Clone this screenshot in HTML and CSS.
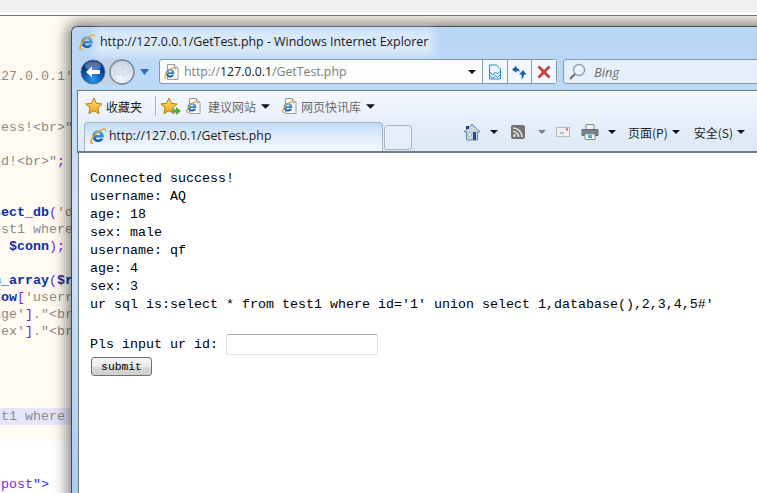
FILE: index.html
```html
<!DOCTYPE html>
<html lang="en">
<head>
<meta charset="utf-8">
<title>GetTest.php</title>
<link rel="stylesheet" href="styles.css">
</head>
<body>
<svg class="defs" width="0" height="0" aria-hidden="true">
  <defs>
    <linearGradient id="gBlue" x1="0" y1="0" x2="0" y2="1"><stop offset="0" stop-color="#5ab4f0"/><stop offset="1" stop-color="#0c52ac"/></linearGradient>
    <linearGradient id="gStar" x1="0" y1="0" x2="0" y2="1"><stop offset="0" stop-color="#ffe680"/><stop offset="1" stop-color="#f0a010"/></linearGradient>
    <radialGradient id="gBack" cx=".5" cy=".8" r=".75"><stop offset="0" stop-color="#2ea0ee"/><stop offset=".55" stop-color="#0a4fa8"/><stop offset="1" stop-color="#032a70"/></radialGradient>
    <radialGradient id="gFwd" cx=".5" cy=".7" r=".7"><stop offset="0" stop-color="#f4f8fc"/><stop offset="1" stop-color="#c2d0de"/></radialGradient>
    <symbol id="ie" viewBox="0.5 0.5 15 15">
      <path d="M8.200 2.600a5.500 5.500 0 0 0-5.600 5.600c0 3.200 2.400 5.400 5.500 5.400 2.400 0 4.300-1.200 5-3.300h-3.200c-.4.700-1 1-1.800 1-1.100 0-2-.8-2.100-2h7.400c.3-3.800-2.200-6.700-5.200-6.700zM6 7c.2-1 1-1.700 2.100-1.700S10 6 10.100 7z" fill="url(#gBlue)" fill-rule="evenodd"/>
      <path d="M1 15c-1.300-1.500.8-6 4.500-9.500C9.400 1.800 13.800-.2 15.200 1c.9.800.4 2.400-.4 3.700.2-1.100.2-2-.4-2.400-1.200-.9-4.700 1-7.800 4S1.600 12.500 2.300 13.900c.4.700 1.500.7 2.700.2-1.500 1.100-3.200 1.700-4 .9z" fill="#e8a020"/>
    </symbol>
    <symbol id="page" viewBox="0 0 16 16">
      <path d="M3.500.5h7l3.500 3.500v11.500H3.500z" fill="#fbfcfe" stroke="#9a9a9a"/>
      <path d="M10.500.5V4H14" fill="#e4e8ee" stroke="#9a9a9a"/>
      <use href="#ie" x="0" y="3" width="12" height="12"/>
    </symbol>
    <symbol id="star" viewBox="0 0 18 18">
      <path d="M9 1l2.400 5.300 5.700.7-4.200 3.900 1.200 5.700L9 13.800l-5.100 2.800 1.200-5.700L.9 7l5.700-.7z" fill="url(#gStar)" stroke="#b87a10" stroke-linejoin="round"/>
    </symbol>
  </defs>
</svg>
<div class="desktop">
  <div class="strip"></div>
  <pre class="code"><span class="gy">127.0.0.1'</span>


<span class="gy">cess!&lt;br&gt;"</span>

<span class="gy">ed!&lt;br&gt;"</span><span class="pu">;</span>


<span class="bl">sect_db</span><span class="pu">(</span><span class="gy">'d</span>
<span class="gy">est1 where</span>
  <span class="bl">$conn</span><span class="pu">);</span>

<span class="bl">n_array</span><span class="pu">(</span><span class="bl">$r</span>
<span class="bl">row</span><span class="pu">[</span><span class="gy">'userr</span>
<span class="gy">age'</span><span class="pu">]</span><span class="gy">."&lt;br</span>
<span class="gy">sex'</span><span class="pu">]</span><span class="gy">."&lt;br</span>




<span class="hl"><span class="gy">st1 where i</span></span>



<span class="pu">"post</span><span class="qt">"&gt;</span></pre>

  <div class="window">
    <div class="titlebar">
      <svg class="ic16"><use href="#ie"/></svg>
      <span class="titletext">http://127.0.0.1/GetTest.php - Windows Internet Explorer</span>
    </div>
    <div class="navrow">
      <div class="navbtns">
        <div class="navpair">
          <svg class="navsvg" viewBox="0 0 26 26"><circle cx="13" cy="13" r="12" fill="url(#gBack)" stroke="#5d7f9e"/><ellipse cx="13" cy="7" rx="8" ry="4.500" fill="#fff" opacity=".3"/><path d="M6 13l6-5.500V11h8v4h-8v3.500z" fill="#fff"/></svg>
          <svg class="navsvg" viewBox="0 0 26 26"><circle cx="13" cy="13" r="12" fill="url(#gFwd)" stroke="#75838f" stroke-width="1.300"/><path d="M20 13l-6-5.500V11H6v4h8v3.500z" fill="#dfe7ef" stroke="#bcc8d4" stroke-width=".6"/></svg>
        </div>
        <svg class="navdrop" viewBox="0 0 9 6"><path d="M0 0h9L4.500 6z" fill="#2c6fb4"/></svg>
      </div>
      <div class="addr">
        <svg class="ic16 addricon"><use href="#page"/></svg>
        <span class="url">http://<b>127.0.0.1</b>/GetTest.php</span>
        <svg class="tri tri-addr" viewBox="0 0 8 4"><path d="M0 0h8L4 4z"/></svg>
        <span class="addrbtn">
          <svg class="ic16" viewBox="0 0 16 16"><path d="M2.500 1h7l4 4v10h-11z" fill="#eaf5fd" stroke="#2a8ac8"/><path d="M3 8l3 3 2.500-3 2 2 3-3M3 11.500l3 3 2.500-3 2 2 3-3" fill="none" stroke="#2a8ac8"/></svg>
        </span>
        <span class="addrbtn">
          <svg class="ic16" viewBox="0 0 16 16"><path d="M5.500 1.500L1 5.500 5.500 9V7c1.500-.2 2.500.2 3 1.500.3-3-1-4.500-3-4.500z" fill="#1d5ea8"/><path d="M12 6l3.500 4.500H13c0 2-.8 3.700-2.500 4.500.5-1.500.3-3.300-.3-4.500H8z" fill="#1d5ea8"/></svg>
        </span>
        <span class="addrbtn">
          <svg class="ic16" viewBox="0 0 16 16"><path d="M2.500 2.500l11 11M13.500 2.500l-11 11" stroke="#c43b3b" stroke-width="2.600" fill="none"/></svg>
        </span>
      </div>
      <div class="search">
        <svg class="searchicon" viewBox="0 0 18 18"><circle cx="11" cy="7" r="5.500" fill="#e8f3fc" stroke="#8aa0b0" stroke-width="1.400"/><path d="M7 11l-5 5" stroke="#777" stroke-width="2.400"/></svg>
        <i>Bing</i>
      </div>
    </div>
    <div class="panel">
      <div class="favbar">
        <svg class="ic18"><use href="#star"/></svg>
        <span class="cjk dark favlabel">收藏夹</span>
        <span class="vsep"></span>
        <span class="addstar">
          <svg class="ic18"><use href="#star"/></svg>
          <svg class="plus" viewBox="0 0 9 8"><path d="M0 2.500h4V0l5 4-5 4V5.500H0z" fill="#4cb040"/></svg>
        </span>
        <svg class="ic16 pageicon"><use href="#page"/></svg>
        <span class="cjk soft">建议网站</span>
        <svg class="tri tri-fav" viewBox="0 0 8 4"><path d="M0 0h8L4 4z"/></svg>
        <svg class="ic16 pageicon2"><use href="#page"/></svg>
        <span class="cjk soft">网页快讯库</span>
        <svg class="tri tri-fav" viewBox="0 0 8 4"><path d="M0 0h8L4 4z"/></svg>
      </div>
      <div class="tabbar">
        <div class="tab">
          <svg class="ic16"><use href="#ie"/></svg>
          <span class="tabtext">http://127.0.0.1/GetTest.php</span>
        </div>
        <div class="newtab"></div>
        <div class="tools">
          <svg class="ic18 t-home" viewBox="0 0 18 18"><path d="M9 1L1 9h2.500v8h11V9H17z" fill="#c8d4e0" stroke="#5a6e90" stroke-width=".8"/><path d="M3 3h3v3H3z" fill="#2438a8"/><path d="M10 9h3v8h-3z" fill="#1c4ea0"/><path d="M5 10h3v3H5z" fill="#fff" stroke="#7a8aa0" stroke-width=".5"/></svg>
          <svg class="tri tri-tool" viewBox="0 0 8 4"><path d="M0 0h8L4 4z"/></svg>
          <svg class="ic16 t-rss" viewBox="0 0 14 14"><rect width="14" height="14" rx="2" fill="#737373"/><circle cx="3.500" cy="10.500" r="1.500" fill="#ddd"/><path d="M2 6.500a5.500 5.500 0 0 1 5.500 5.500M2 3a9 9 0 0 1 9 9" fill="none" stroke="#ddd" stroke-width="1.700"/></svg>
          <svg class="tri tri-tool off t-rssarrow" viewBox="0 0 8 4"><path d="M0 0h8L4 4z"/></svg>
          <svg class="ic14 t-mail" viewBox="0 0 14 10"><rect x=".5" y=".5" width="13" height="9" fill="#f2f0ee" stroke="#b8b8b8"/><path d="M4 6h4" stroke="#8a8a8a"/><rect x="10" y="1.500" width="2" height="2" fill="#e05050"/></svg>
          <svg class="ic18 t-print" viewBox="0 0 18 16"><path d="M5 .5h8v5H5z" fill="#f4f4f4" stroke="#8c8c8c"/><path d="M1 5.500h16v6H1z" fill="#77838c" stroke="#5f6a72"/><path d="M4 10h10v5.500H4z" fill="#fff" stroke="#8c8c8c"/><path d="M7 11h4v3H7z" fill="#4ab0d0"/></svg>
          <svg class="tri tri-tool" viewBox="0 0 8 4"><path d="M0 0h8L4 4z"/></svg>
          <span class="cjk dark toollabel">页面(P)</span>
          <svg class="tri tri-small" viewBox="0 0 8 4"><path d="M0 0h8L4 4z"/></svg>
          <span class="cjk dark toollabel2">安全(S)</span>
          <svg class="tri tri-small" viewBox="0 0 8 4"><path d="M0 0h8L4 4z"/></svg>
        </div>
      </div>
    </div>
    <div class="page">
      <div>Connected success!</div>
      <div>username: AQ</div>
      <div>age: 18</div>
      <div>sex: male</div>
      <div>username: qf</div>
      <div>age: 4</div>
      <div>sex: 3</div>
      <div>ur sql is:select * from test1 where id='1' union select 1,database(),2,3,4,5#'</div>
      <div class="spacer"></div>
      <form class="form">
        <label class="inputline">Pls input ur id: <input class="field" type="text"></label>
        <button class="submit" type="button">submit</button>
      </form>
    </div>
  </div>
</div>
</body>
</html>
```
FILE: styles.css
```css
* { box-sizing: border-box; }
html, body { margin: 0; padding: 0; }
body { width: 757px; height: 493px; overflow: hidden; background: #fff; }
.defs { position: absolute; }
svg { display: block; flex: none; }

.desktop { position: relative; width: 757px; height: 493px; overflow: hidden; background: #fff; }
.strip {
  position: relative; z-index: 2; height: 16px; background: #f0f0f0;
  border-bottom: 1px solid #707070;
  box-shadow: inset 0 -3px 0 #fff;
}

.code {
  margin: 0 0 0 -7px; padding-top: 52px; height: 477px;
  font: 13.33px/17px "Liberation Mono", monospace;
  color: #808080;
  background: linear-gradient(#fffbf2 425px, #fff 425px);
}
.gy { color: #8a8a8a; }
.bl { color: #0b2fa8; font-weight: bold; }
.pu { color: #7a1fd0; }
.qt { color: #1f2fff; }
.hl { display: inline-block; width: 90px; background: #e6e6fa; }

.window {
  position: absolute; left: 71px; top: 26px; width: 720px; height: 490px;
  border-radius: 6px 6px 0 0;
  border-top: 1px solid #3d4a58;
  border-left: 1px solid #3d4a58;
  background: linear-gradient(#b8d6f5, #bcd9f7 60px, #cfe3f8 200px, #a9cbee 480px);
  box-shadow: 0 0 15px 3px rgba(0, 0, 0, .55);
  font-family: "Open Sans", "Noto Sans", sans-serif;
  display: flex; flex-direction: column;
}

.titlebar { display: flex; align-items: center; gap: 5px; height: 29px; padding: 0 0 0 7px; flex: none; }
.titletext {
  font-size: 12.4px; color: #1a1a1a; white-space: nowrap; line-height: 16px;
  background: rgba(255, 255, 255, .45);
  box-shadow: 0 0 9px 6px rgba(255, 255, 255, .45);
}
.ic16 { width: 16px; height: 16px; }
.ic18 { width: 18px; height: 18px; }
.ic14 { width: 14px; height: 10px; }

.navrow { display: flex; align-items: center; height: 34px; flex: none; padding: 0 0 3px 8px; }
.navbtns { display: flex; align-items: center; gap: 3px; width: 79px; flex: none; }
.navpair { display: flex; gap: 3px; background: #c3d3e6; border-radius: 13px; }
.navsvg { width: 26px; height: 26px; }
.navdrop { width: 9px; height: 6px; margin-left: 2px; }

.addr {
  display: flex; align-items: center; width: 398px; height: 25px; flex: none;
  background: #fbfdff; border: 1px solid #8c97a3; border-radius: 3px;
}
.addricon { margin-left: 4px; }
.url { font-size: 12.3px; color: #7d7d7d; margin-left: 4px; width: 287px; white-space: nowrap; }
.url b { color: #222; font-weight: 400; }
.tri { width: 8px; height: 4px; fill: #111; }
.tri-addr { margin-right: 6px; }
.addrbtn {
  display: flex; align-items: center; justify-content: center;
  width: 25px; height: 100%; border-left: 1px solid #8c97a3;
  background: #f3f8fe;
}
.search {
  display: flex; align-items: center; gap: 8px; width: 200px; height: 25px; margin-left: 6px; flex: none;
  background: #e6f0fb; border: 1px solid #8c97a3; border-radius: 3px;
  padding-left: 4px; font-size: 13px; color: #6d6d6d;
}
.searchicon { width: 18px; height: 18px; }

.panel {
  flex: none; margin-left: 5px; height: 63px;
  border: 1px solid #6d7a88; border-right: 0; border-bottom: 2px solid #6d7a88;
  background: linear-gradient(#f5f9ff, #e9f1fb 40%, #dbe8f6);
  display: flex; flex-direction: column;
}
.favbar { display: flex; align-items: center; height: 30px; padding-left: 7px; flex: none; font-size: 12px; }
.cjk { font-family: "Noto Sans CJK SC", "Open Sans", sans-serif; font-size: 12px; white-space: nowrap; }
.dark { color: #1c1c1c; }
.soft { color: #6a6a6a; }
.favlabel { margin-left: 3px; }
.vsep { width: 1px; height: 20px; background: #a9b4c0; margin: 0 4px 0 13px; }
.addstar { position: relative; display: block; width: 18px; height: 18px; }
.plus { position: absolute; right: -3px; bottom: 0; width: 9px; height: 8px; }
.pageicon { margin: 0 6px 0 8px; }
.pageicon2 { margin: 0 3px 0 12px; }
.tri-fav { width: 9px; height: 5px; margin-left: 5px; }

.tabbar { display: flex; align-items: flex-end; height: 30px; flex: none; padding-left: 6px; }
.tab {
  display: flex; align-items: center; gap: 3px; width: 299px; height: 29px; padding: 0 0 3px 5px;
  background: linear-gradient(#c0dbf7, #e4effb 55%, #f3f8fe);
  border: 1px solid #a7b4c2; border-bottom: 0; border-radius: 4px 4px 0 0;
}
.tabtext { font-size: 12.3px; color: #1b1b1b; white-space: nowrap; }
.newtab {
  width: 28px; height: 25px; margin: 0 0 1px 1px;
  background: #e6eff9; border: 1px solid #a7b4c2; border-radius: 3px;
}
.tools { display: flex; align-items: center; height: 29px; padding-bottom: 9px; margin-left: 51px; }
.tri-tool { margin-left: 9px; }
.t-rss { margin-left: 13px; width: 14px; height: 14px; }
.off { fill: #7f7f7f; }
.t-rssarrow { margin-left: 13px; }
.t-mail { margin-left: 10px; }
.t-print { margin-left: 11px; }
.toollabel { margin-left: 12px; }
.tri-small { margin-left: 4px; }
.toollabel2 { margin-left: 14px; }

.page {
  flex: 1; margin-left: 6px; padding: 17px 0 0 11px;
  background: #fff; border-left: 1px solid #6d7a88;
  font: 13.33px/18px "Liberation Mono", monospace; color: #000;
}
.page > div { white-space: pre; }
.spacer { height: 18px; }
.form { margin: 0; padding-top: 2px; }
.inputline { display: flex; align-items: center; height: 21px; white-space: pre; }
.field {
  width: 152px; height: 21px; padding: 0; margin: 0;
  border: 1px solid #e2e3ea; border-top-color: #abadb3; border-radius: 2px; background: #fff;
}
.submit {
  display: block; width: 61px; height: 19px; padding: 0; margin: 2px 0 0 1px;
  font: 11.33px/16px "Liberation Mono", monospace; color: #000;
  background: linear-gradient(#f4f4f4 0, #ebebeb 50%, #d8d8d8 51%, #cfcfcf);
  border: 1px solid #707070; border-radius: 3px;
}
```
